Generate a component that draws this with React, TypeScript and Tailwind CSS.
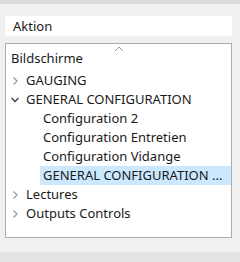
const font = { fontFamily: '"Noto Sans", "Open Sans", sans-serif' };

function Chevron({ open }: { open?: boolean }) {
  if (open) {
    return (
      <svg width="10" height="19" viewBox="0 0 10 19" className="shrink-0">
        <path d="M1.5 8 L5 11.5 L8.5 8" fill="none" stroke="#404040" strokeWidth="1.3" />
      </svg>
    );
  }
  return (
    <svg width="10" height="19" viewBox="0 0 10 19" className="shrink-0">
      <path d="M3.5 6.5 L7 10 L3.5 13.5" fill="none" stroke="#9c9c9c" strokeWidth="1.3" />
    </svg>
  );
}

function Node({ label, open }: { label: string; open?: boolean }) {
  return (
    <div className="flex h-[19px] items-center pl-[4px] gap-[6px]">
      <Chevron open={open} />
      <span>{label}</span>
    </div>
  );
}

function Leaf({ label, selected }: { label: string; selected?: boolean }) {
  return (
    <div
      className={
        selected
          ? 'h-[19px] ml-[34px] pl-[3px] bg-[#cce8ff] whitespace-nowrap overflow-hidden'
          : 'h-[19px] ml-[34px] pl-[3px] whitespace-nowrap overflow-hidden'
      }
    >
      {label}
    </div>
  );
}

export default function App() {
  return (
    <div className="w-[240px] h-[262px] bg-[#f0f0f0] flex flex-col text-[13px] leading-[19px] text-[#1a1a1a]" style={font}>
      <div className="h-[4px] bg-[#dadada]" />
      <div className="flex-1 pl-[5px] pr-[8px] pt-[12px] flex flex-col">
        <div className="h-[20px] bg-white pl-[8px] text-[13px] leading-[20px]">Aktion</div>
        <div className="mt-[7px] h-[195px] bg-white border border-[#adadad] relative pt-[5px]">
          <svg width="10" height="6" viewBox="0 0 10 6" className="absolute left-[108px] top-[2px]">
            <path d="M1 5 L5 1 L9 5" fill="none" stroke="#9a9a9a" strokeWidth="1" />
          </svg>
          <div className="h-[19px] pl-[5px]">Bildschirme</div>
          <div className="mt-[3px]">
            <Node label="GAUGING" />
            <Node label="GENERAL CONFIGURATION" open />
            <Leaf label="Configuration 2" />
            <Leaf label="Configuration Entretien" />
            <Leaf label="Configuration Vidange" />
            <Leaf label="GENERAL CONFIGURATION ..." selected />
            <Node label="Lectures" />
            <Node label="Outputs Controls" />
          </div>
        </div>
      </div>
      <div className="h-[10px] bg-[#e3e3e3]" />
    </div>
  );
}
